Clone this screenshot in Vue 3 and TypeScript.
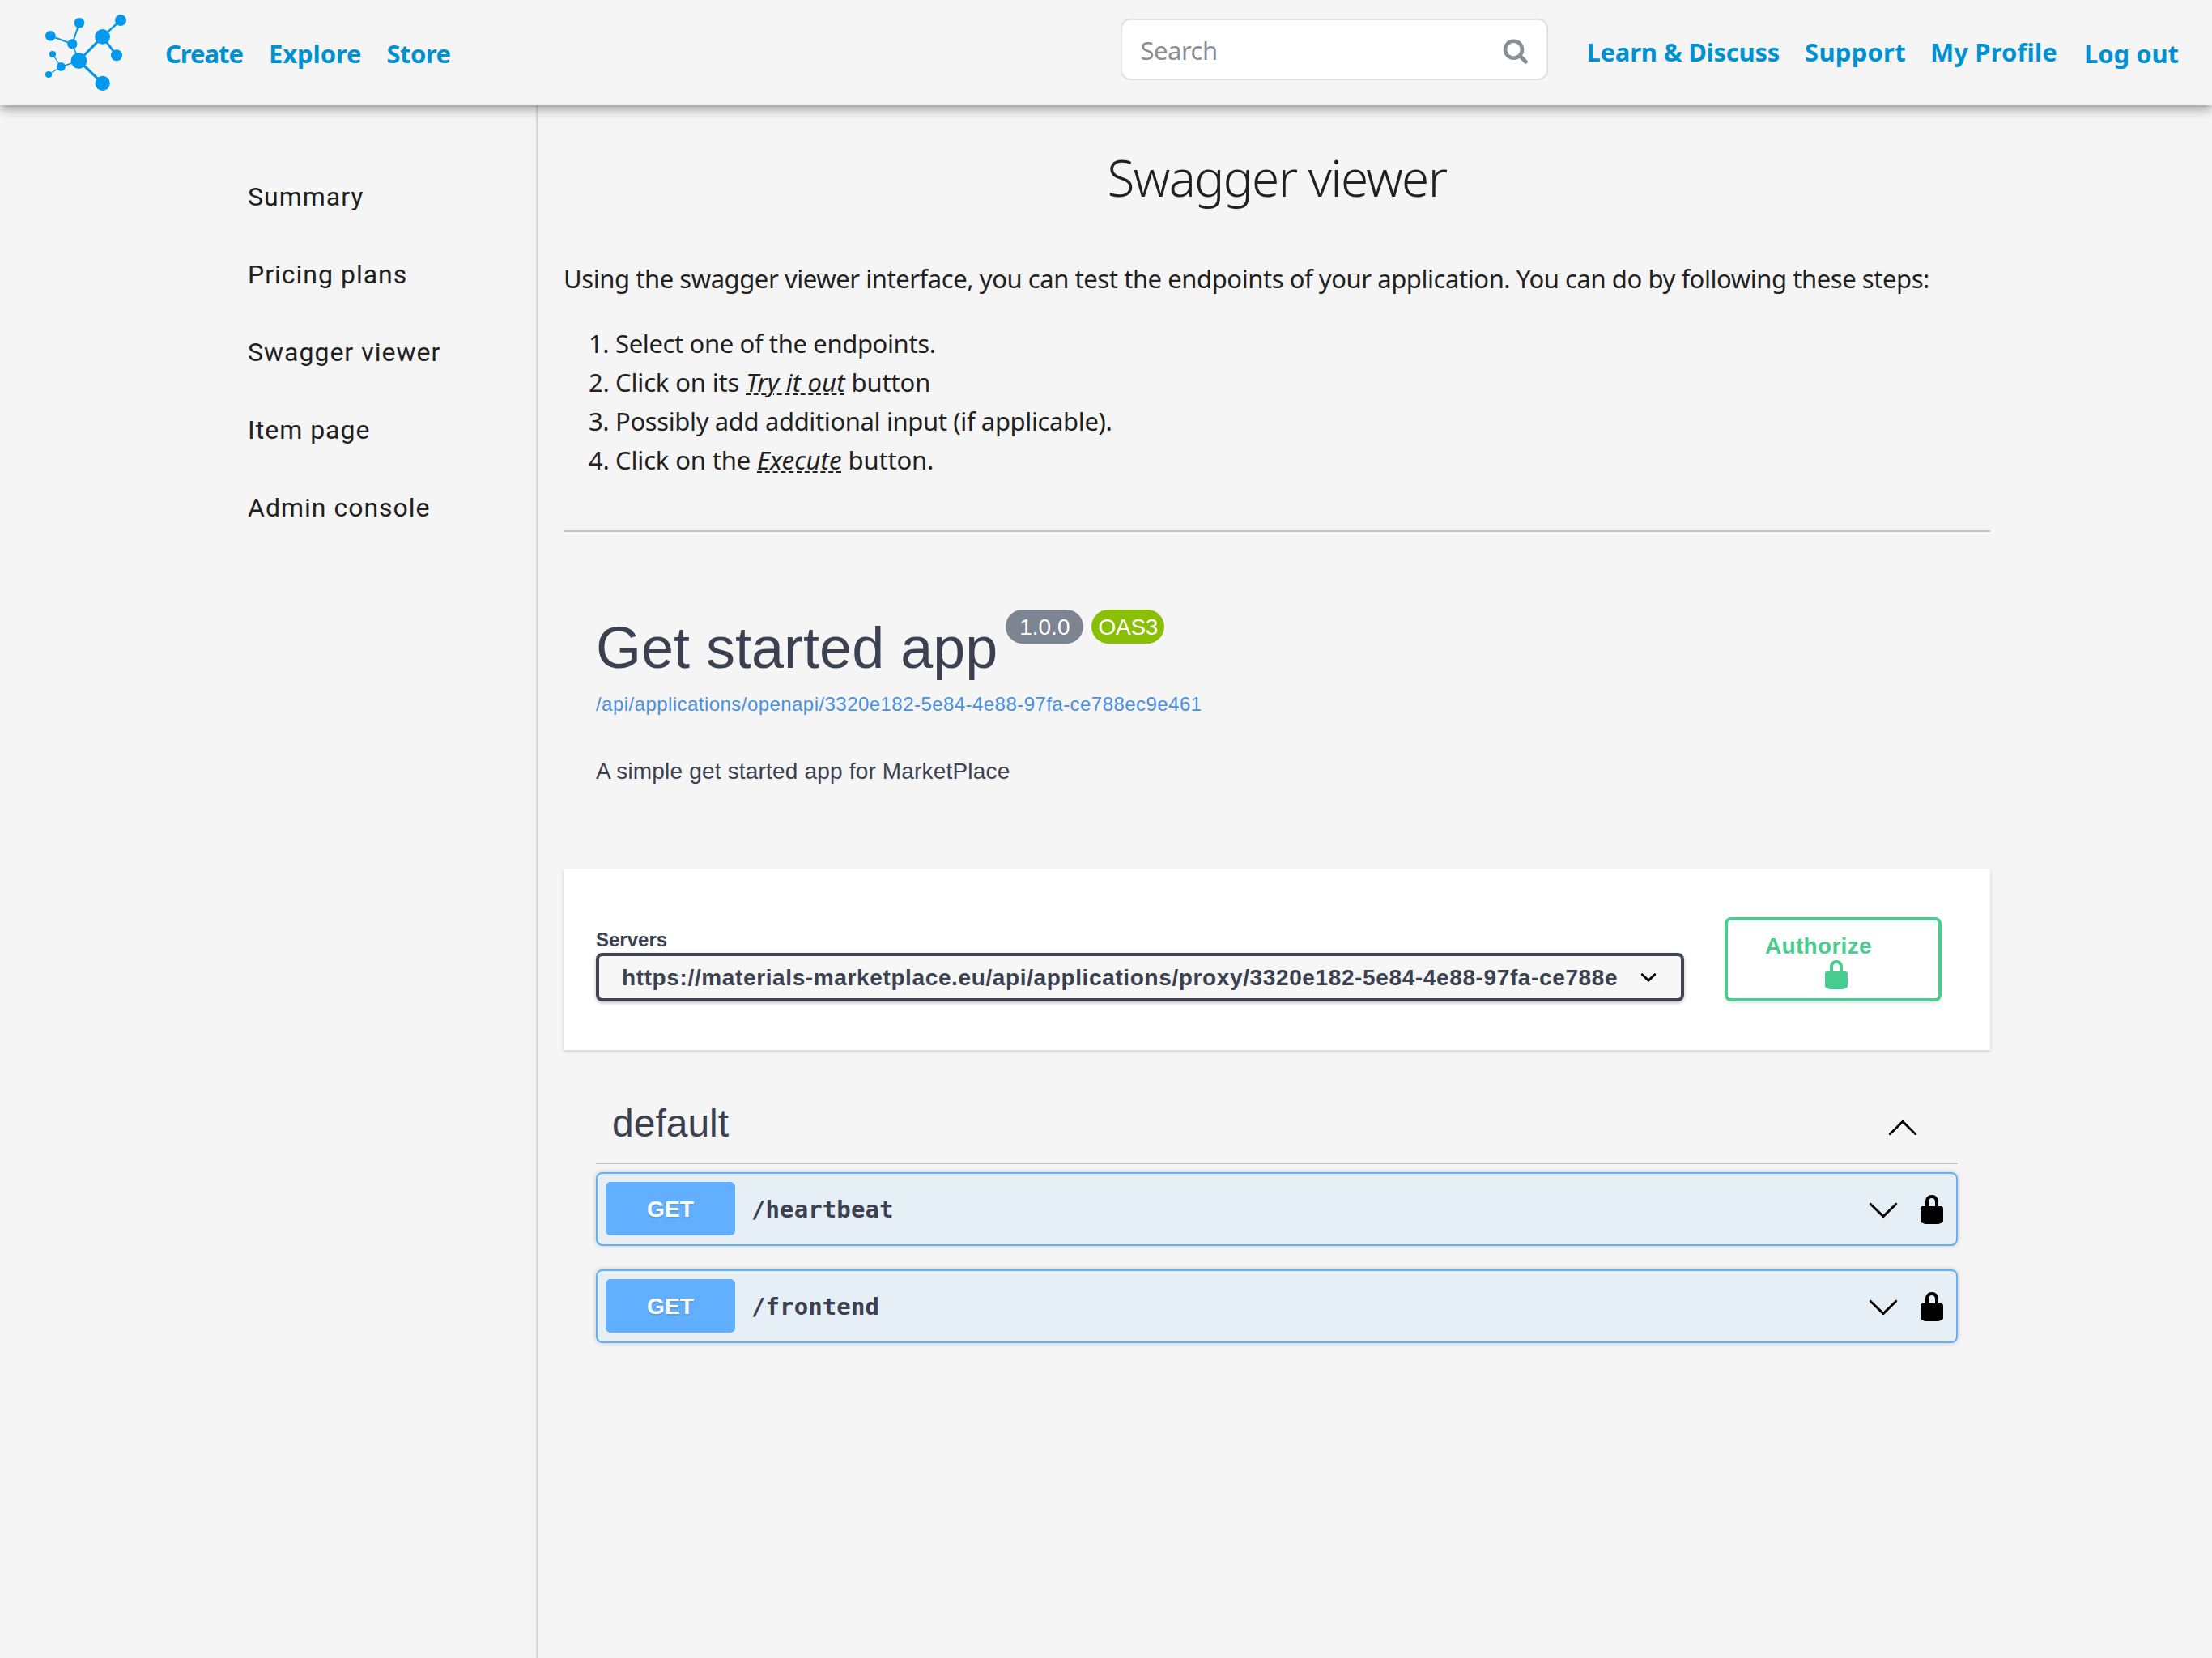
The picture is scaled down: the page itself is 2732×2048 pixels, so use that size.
<script setup lang="ts">
interface NavLink { label: string; cls: string }

const leftLinks: NavLink[] = [
  { label: 'Create', cls: 'create' },
  { label: 'Explore', cls: 'explore' },
  { label: 'Store', cls: 'store' },
]
const rightLinks: NavLink[] = [
  { label: 'Learn & Discuss', cls: 'learn' },
  { label: 'Support', cls: 'support' },
  { label: 'My Profile', cls: 'profile' },
  { label: 'Log out', cls: 'logout' },
]
const sideLinks: string[] = ['Summary', 'Pricing plans', 'Swagger viewer', 'Item page', 'Admin console']
const operations: { method: string; path: string }[] = [
  { method: 'GET', path: '/heartbeat' },
  { method: 'GET', path: '/frontend' },
]

const lockPath =
  'M15.8 8H14V5.6C14 2.703 12.665 1 10 1 7.334 1 6 2.703 6 5.6V8H4c-.553 0-1 .646-1 1.199V17c0 .549.428 1.139.951 1.307l1.197.387C5.672 18.861 6.55 19 7.1 19h5.8c.549 0 1.428-.139 1.951-.307l1.196-.387c.524-.167.953-.757.953-1.306V9.199C17 8.646 16.352 8 15.8 8zM12 8H8V5.199C8 3.754 8.797 3 10 3c1.203 0 2 .754 2 2.199V8z'
const arrowDown =
  'M17.418 6.109c.272-.268.709-.268.979 0s.271.701 0 .969l-7.908 7.83c-.27.268-.707.268-.979 0l-7.908-7.83c-.27-.268-.27-.701 0-.969.271-.268.709-.268.979 0L10 13.25l7.418-7.141z'
const arrowUp =
  'M17.418 14.908c.272.268.709.268.979 0s.271-.701 0-.969l-7.908-7.83c-.27-.268-.707-.268-.979 0l-7.908 7.83c-.27.268-.27.701 0 .969.271.268.709.268.979 0L10 7.767l7.418 7.141z'
const selectArrow =
  'M13.418 7.859c.271-.268.709-.268.978 0 .27.268.272.701 0 .969l-3.908 3.83c-.27.268-.707.268-.979 0l-3.908-3.83c-.27-.267-.27-.701 0-.969.271-.268.709-.268.978 0L10 11l3.418-3.141z'
</script>

<template>
  <div class="page">
    <header class="topbar">
      <svg class="logo" viewBox="0 0 110 110" width="110" height="110">
        <g stroke="#0099ee" fill="none">
          <path stroke-width="3.2" d="M47.4 66 76.6 36.4M47.4 66 76.7 93.8" />
          <path stroke-width="2.8" d="M76.6 36.4 94 59.3" />
          <path stroke-width="2.4" d="M76.6 36.4 99 16" />
          <path stroke-width="2" d="M39.3 45.4 12.3 35.3M39.3 45.4 48 19.3" />
          <path stroke-width="1.6" d="M47.4 66 39.3 45.4M47.4 66 25.4 73.4" />
          <path stroke-width="1.2" d="M25.4 73.4 15 58M25.4 73.4 10.1 83" />
        </g>
        <g fill="#0099ee">
          <circle cx="48" cy="19.3" r="6.3" />
          <circle cx="12.3" cy="35.3" r="6.3" />
          <circle cx="39.3" cy="45.4" r="6.1" />
          <circle cx="15" cy="58" r="4.1" />
          <circle cx="25.4" cy="73.4" r="5.4" />
          <circle cx="10.1" cy="83" r="4.1" />
          <circle cx="47.4" cy="66" r="9.9" />
          <circle cx="76.6" cy="36.4" r="9.4" />
          <circle cx="99" cy="16" r="7" />
          <circle cx="94" cy="59.3" r="7" />
          <circle cx="76.7" cy="93.8" r="9.1" />
        </g>
      </svg>
      <nav class="nav nav-left">
        <a v-for="l in leftLinks" :key="l.label" :class="['nav-link', l.cls]">{{ l.label }}</a>
      </nav>
      <div class="search">
        <span class="search-text">Search</span>
        <svg class="search-icon" viewBox="0 0 32 32" width="32" height="32">
          <circle cx="13.5" cy="13.2" r="10.5" fill="none" stroke="#868e96" stroke-width="4.6" />
          <path d="M21.2 21 28.4 28.2" stroke="#868e96" stroke-width="4.8" stroke-linecap="round" />
        </svg>
      </div>
      <nav class="nav nav-right">
        <a v-for="l in rightLinks" :key="l.label" :class="['nav-link', l.cls]">{{ l.label }}</a>
      </nav>
    </header>

    <div class="body">
      <aside class="sidebar">
        <a v-for="s in sideLinks" :key="s" class="side-link">{{ s }}</a>
      </aside>

      <main class="content">
        <h1 class="title">Swagger viewer</h1>
        <p class="intro">Using the swagger viewer interface, you can test the endpoints of your application. You can do by following these steps:</p>
        <ol class="steps">
          <li><span class="num">1.</span>Select one of the endpoints.</li>
          <li class="loose"><span class="num">2.</span>Click on its <em>Try it out</em> button</li>
          <li><span class="num">3.</span>Possibly add additional input (if applicable).</li>
          <li class="loose"><span class="num">4.</span>Click on the <em>Execute</em> button.</li>
        </ol>
        <div class="rule"></div>

        <section class="info">
          <div class="info-head">
            <h2 class="app-name">Get started app</h2>
            <span class="badge version">1.0.0</span>
            <span class="badge oas">OAS3</span>
          </div>
          <a class="spec">/api/applications/openapi/3320e182-5e84-4e88-97fa-ce788ec9e461</a>
          <p class="desc">A simple get started app for MarketPlace</p>
        </section>

        <section class="scheme">
          <div class="servers">
            <span class="servers-label">Servers</span>
            <div class="select">
              <span class="select-text">https://materials-marketplace.eu/api/applications/proxy/3320e182-5e84-4e88-97fa-ce788e</span>
              <svg viewBox="0 0 20 20" width="40" height="40"><path :d="selectArrow" /></svg>
            </div>
          </div>
          <button class="authorize">
            <span>Authorize</span>
            <svg viewBox="0 0 20 20" width="40" height="40"><path :d="lockPath" fill="#49cc90" /></svg>
          </button>
        </section>

        <section class="tag">
          <div class="tag-head">
            <h3>default</h3>
            <svg viewBox="0 0 20 20" width="40" height="40"><path :d="arrowUp" /></svg>
          </div>
          <div v-for="op in operations" :key="op.path" class="op">
            <span class="method">{{ op.method }}</span>
            <span class="path">{{ op.path }}</span>
            <svg class="chev" viewBox="0 0 20 20" width="40" height="40"><path :d="arrowDown" /></svg>
            <svg viewBox="0 0 20 20" width="40" height="40"><path :d="lockPath" /></svg>
          </div>
        </section>
      </main>
    </div>
  </div>
</template>

<style>
body { margin: 0; background: #f5f5f5; }
</style>

<style scoped>
* { box-sizing: border-box; }
.page {
  width: 2732px; height: 2048px; overflow: hidden; display: flex; flex-direction: column;
  background: #f5f5f5; color: #212121;
  font-family: "Noto Sans", sans-serif; font-size: 31px;
}
.topbar {
  position: relative; z-index: 2; flex: none; height: 130px; display: flex; align-items: flex-start;
  padding-right: 41px; background: #f5f5f5;
  box-shadow: 0 4px 8px -2px rgba(0,0,0,.2), 0 8px 10px rgba(0,0,0,.14), 0 2px 20px rgba(0,0,0,.12);
}
.logo { flex: none; margin: 9px 0 0 50px; }
.nav { display: flex; }
.nav-left { margin: 42px auto 0 44px; }
.nav-right { margin: 40px 0 0 48px; }
.nav-link { color: #0091d2; font-weight: 700; line-height: 48px; white-space: nowrap; }
.create { letter-spacing: -1.03px; margin-right: 32px; }
.explore { letter-spacing: -.12px; margin-right: 31px; }
.store { letter-spacing: -.5px; }
.learn { letter-spacing: -.27px; margin-right: 31px; }
.support { letter-spacing: .25px; margin-right: 30px; }
.profile { letter-spacing: .12px; margin-right: 33px; }
.logout { letter-spacing: -.05px; margin-top: 2px; }
.search {
  width: 528px; height: 76px; margin-top: 23px; padding: 0 22px 0 23px; display: flex; align-items: center; justify-content: space-between;
  background: #fff; border: 2px solid #dee2e6; border-radius: 12px; color: #868e96;
}
.search-text { line-height: 48px; letter-spacing: -.5px; margin-top: 2px; }
.search-icon { margin-top: 5px; }

.body { flex: 1; display: flex; }
.sidebar { width: 664px; flex: none; padding: 65px 0 0 306px; display: flex; flex-direction: column; border-right: 2px solid #d8d8d8; }
.side-link { line-height: 96px; font-family: Roboto, sans-serif; font-size: 32px; letter-spacing: 1px; }
.content { width: 1794px; padding: 41px 0 0 32px; }
.title { margin: 0; font-size: 62px; font-weight: 300; line-height: 96px; letter-spacing: -1.7px; text-align: center; }
.intro { margin: 53px 0 0; line-height: 48px; letter-spacing: -.437px; white-space: nowrap; }
.steps { list-style: none; margin: 32px 0 0; padding: 0 0 0 31px; line-height: 48px; letter-spacing: -.37px; }
.loose { letter-spacing: -.15px; }
.num { display: inline-block; width: 33px; }
em { letter-spacing: .15px; text-decoration: underline dashed 2px; text-underline-offset: 2px; }
.rule { margin-top: 63px; height: 2px; background: #c4c4c4; }

.info { padding: 101px 0 0 40px; color: #3b4151; font-family: "Liberation Sans", sans-serif; }
.info-head { display: flex; align-items: flex-start; height: 84px; }
.app-name { margin: 0; font-size: 72px; font-weight: 400; line-height: 84px; }
.badge { height: 42px; margin-top: -5px; border-radius: 21px; color: #fff; font-size: 28px; line-height: 43px; text-align: center; }
.version { width: 96px; margin-left: 10px; background: #7d8492; }
.oas { width: 90px; margin-left: 10px; background: #89bf04; letter-spacing: -.3px; }
.spec { display: block; margin-top: 12px; color: #4990e2; font-size: 24px; line-height: 32px; letter-spacing: .45px; }
.desc { margin: 47px 0 0; font-size: 28px; line-height: 40px; letter-spacing: .18px; }

.scheme {
  height: 224px; margin-top: 100px; padding: 60px 60px 0 40px; display: flex; justify-content: space-between; align-items: flex-start;
  background: #fff; box-shadow: 0 2px 4px rgba(0,0,0,.15); color: #3b4151; font-family: "Liberation Sans", sans-serif;
}
.servers { width: 1344px; padding-top: 12px; }
.servers-label { display: block; height: 32px; font-size: 24px; font-weight: 700; line-height: 31px; }
.select {
  height: 60px; display: flex; align-items: center; justify-content: space-between; padding: 0 20px 0 28px;
  border: 4px solid #41444e; border-radius: 8px; background: #f7f7f7; box-shadow: 0 2px 4px rgba(0,0,0,.25);
}
.select-text { margin-top: 2px; font-size: 28px; font-weight: 700; letter-spacing: .623px; white-space: nowrap; }
.authorize {
  width: 268px; height: 104px; padding: 15px 46px 0; display: flex; flex-direction: column; align-items: flex-start;
  border: 4px solid #49cc90; border-radius: 8px; background: transparent; box-shadow: 0 2px 4px rgba(0,0,0,.1);
  color: #49cc90; font: 700 28px/34px "Liberation Sans", sans-serif; letter-spacing: .31px;
}
.authorize svg { margin: -2px 0 0 68px; }

.tag { padding: 0 40px; color: #3b4151; font-family: "Liberation Sans", sans-serif; }
.tag-head { height: 141px; margin-bottom: 10px; padding: 40px 48px 0 20px; display: flex; justify-content: space-between; border-bottom: 2px solid #c3c4c9; }
.tag-head h3 { margin: 0; font-size: 48px; font-weight: 400; line-height: 102px; }
.tag-head svg { margin-top: 35px; }
.op {
  height: 91px; margin-bottom: 29px; padding: 0 10px; display: flex; align-items: center;
  border: 2px solid #61affe; border-radius: 8px; background: #e6eef6; box-shadow: 0 0 6px rgba(0,0,0,.19);
}
.method {
  width: 160px; height: 66px; margin-bottom: 1px; border-radius: 6px; background: #61affe; color: #fff;
  font-size: 28px; font-weight: 700; line-height: 67px; text-align: center; letter-spacing: .2px; text-shadow: 0 2px 0 rgba(0,0,0,.1);
}
.path { flex: 1; margin-left: 20px; font: 700 29px/40px "DejaVu Sans Mono", monospace; letter-spacing: .1px; }
.chev { margin-right: 20px; }
</style>
